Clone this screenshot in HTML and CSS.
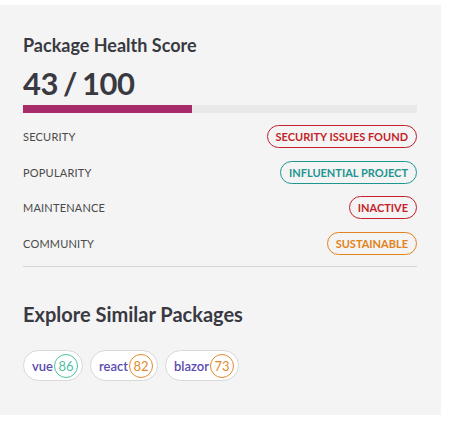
FILE: index.html
```html
<!DOCTYPE html>
<html>
<head>
<meta charset="utf-8">
<link rel="stylesheet" href="styles.css">
</head>
<body>
<div class="card">
  <h2 class="title">Package Health Score</h2>
  <div class="score">43 / 100</div>
  <div class="bar"><div class="fill" style="width:43%"></div></div>
  <ul class="metrics">
    <li class="row"><span class="label">Security</span><span class="pill red">Security issues found</span></li>
    <li class="row"><span class="label">Popularity</span><span class="pill teal">Influential project</span></li>
    <li class="row"><span class="label">Maintenance</span><span class="pill red">Inactive</span></li>
    <li class="row"><span class="label">Community</span><span class="pill orange">Sustainable</span></li>
  </ul>
  <h2 class="title explore">Explore Similar Packages</h2>
  <div class="chips">
    <a class="chip"><span class="name">vue</span><span class="num green">86</span></a>
    <a class="chip"><span class="name">react</span><span class="num amber">82</span></a>
    <a class="chip"><span class="name">blazor</span><span class="num amber">73</span></a>
  </div>
</div>
</body>
</html>
```
FILE: styles.css
```css
html, body { margin: 0; padding: 0; background: #fff; }
body { font-family: Lato, "Open Sans", sans-serif; color: #393942; }
.card {
  margin-top: 5px;
  width: 441px;
  box-sizing: border-box;
  background: #f4f4f4;
  padding: 29px 24px 34px 23px;
}
.title {
  margin: 0;
  font-size: 18px;
  line-height: 22px;
  font-weight: 700;
  color: #393942;
}
.score {
  margin-top: 9px;
  font-size: 31px;
  line-height: 36px;
  font-weight: 700;
  letter-spacing: -0.5px;
  word-spacing: -2px;
  color: #393942;
}
.bar {
  margin-top: 4px;
  height: 8px;
  background: #e8e8e8;
}
.fill { height: 100%; background: #a82c6a; }
.metrics { list-style: none; margin: 6px 0 0; padding: 0 0 5px; border-bottom: 1px solid #d6d6d6; }
.row { display: flex; justify-content: space-between; align-items: center; height: 35.5px; }
.label { text-transform: uppercase; font-size: 11px; color: #4a4a4a; letter-spacing: 0.2px; }
.pill {
  text-transform: uppercase;
  font-size: 11px;
  font-weight: 700;
  border: 1px solid currentColor;
  border-radius: 12px;
  padding: 0 8px;
  height: 21px;
  line-height: 21px;
}
.red { color: #c41f2a; }
.teal { color: #1f9590; }
.orange { color: #e2821a; }
.explore { margin-top: 36px; font-size: 20px; }
.chips { display: flex; gap: 7px; margin-top: 25px; }
.chip {
  display: flex; align-items: center; gap: 1px;
  background: #fff;
  border: 1px solid #d8d8d8;
  border-radius: 16px;
  height: 29px;
  padding: 0 4px 0 8px;
}
.name { color: #5a4bb0; font-size: 13px; font-weight: 600; }
.num {
  width: 22px; height: 22px; border-radius: 50%;
  border: 1px solid currentColor;
  display: flex; align-items: center; justify-content: center;
  font-size: 13px;
}
.green { color: #4ec0a2; }
.amber { color: #e08a2c; }
```
